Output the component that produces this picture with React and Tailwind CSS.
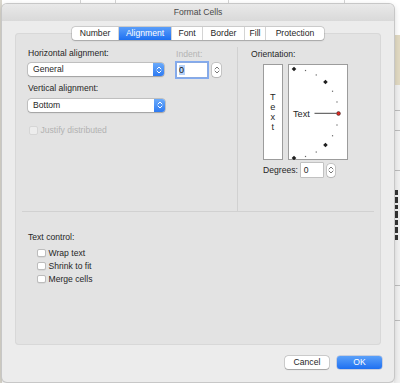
import React from "react";

function UpDown({ color = "#ffffff", sw = 1 }) {
  return (
    <svg width="6" height="10" viewBox="0 0 6 10" fill="none">
      <path d="M1 4 L3 2 L5 4" stroke={color} strokeWidth={sw} strokeLinecap="round" strokeLinejoin="round" />
      <path d="M1 6 L3 8 L5 6" stroke={color} strokeWidth={sw} strokeLinecap="round" strokeLinejoin="round" />
    </svg>
  );
}

function PopUp({ value, className }) {
  return (
    <div className={`flex items-center rounded-[3px] bg-white shadow-[0_0_0_0.5px_rgba(0,0,0,0.25),0_0.5px_1.5px_rgba(0,0,0,0.2)] ${className}`}>
      <span className="flex-1 pl-[5px] text-[8.6px] leading-none text-[#1f1f1f]">{value}</span>
      <span className="flex h-full w-[11px] items-center justify-center rounded-r-[3px] bg-gradient-to-b from-[#6aaafa] to-[#2d7af2]">
        <UpDown />
      </span>
    </div>
  );
}

function Stepper({ className }) {
  return (
    <div className={`flex items-center justify-center rounded-[3px] bg-white shadow-[0_0_0_0.5px_rgba(0,0,0,0.25),0_0.5px_1px_rgba(0,0,0,0.15)] ${className}`}>
      <UpDown color="#555555" sw={0.8} />
    </div>
  );
}

function Check({ label, disabled }) {
  return (
    <div className="flex h-[13px] items-center gap-[3px]">
      <span
        className={
          disabled
            ? "h-[8.5px] w-[8.5px] rounded-[2px] border border-[#d6d6d6] bg-[#ededed]"
            : "h-[8.5px] w-[8.5px] rounded-[2px] border border-[#bcbcbc] bg-white shadow-[0_0.5px_0.5px_rgba(0,0,0,0.1)]"
        }
      />
      <span className={disabled ? "text-[8.6px] text-[#b2b2b2]" : "text-[8.6px] text-[#262626]"}>{label}</span>
    </div>
  );
}

const tabs = [
  { name: "Number", w: "w-[46px]" },
  { name: "Alignment", w: "w-[53px]", active: true },
  { name: "Font", w: "w-[31px]" },
  { name: "Border", w: "w-[42px]" },
  { name: "Fill", w: "w-[21px]" },
  { name: "Protection", w: "w-[59px]" },
];

function Dial() {
  const cx = 5, cy = 48.5, r = 44.5;
  const big = [90, 45, -45, -90];
  const small = [75, 60, 30, 15, -15, -30, -60, -75];
  const pt = (a) => [cx + r * Math.cos((a * Math.PI) / 180), cy - r * Math.sin((a * Math.PI) / 180)];
  return (
    <svg width="58" height="95" viewBox="0 0 58 95">
      {small.map((a) => {
        const [x, y] = pt(a);
        return <rect key={a} x={x - 0.6} y={y - 0.6} width="1.2" height="1.2" fill="#666" />;
      })}
      {big.map((a) => {
        const [x, y] = pt(a);
        return <path key={a} d={`M${x} ${y - 2.3} L${x + 2.3} ${y} L${x} ${y + 2.3} L${x - 2.3} ${y} Z`} fill="#1f1f1f" />;
      })}
      <line x1="25.5" y1="48.3" x2="47.5" y2="48.3" stroke="#333" strokeWidth="0.9" />
      <circle cx={cx + r} cy={cy} r="1.9" fill="#e0261f" stroke="#333" strokeWidth="0.6" />
      <text x="4" y="52" fontSize="9.2" fill="#1f1f1f" fontFamily="Liberation Sans, Arial, sans-serif">Text</text>
    </svg>
  );
}

export default function App() {
  return (
    <div className="relative h-[383px] w-[400px] overflow-hidden bg-white font-['Liberation_Sans',Arial,sans-serif]">
      {/* sheet behind the dialog */}
      <div className="absolute left-0 top-0 h-[383px] w-[2px] bg-[#d9d6cc]" />
      <div className="absolute left-[80px] top-0 h-[5px] w-px bg-[#d3d3d3]" />
      <div className="absolute left-[115px] top-0 h-[5px] w-px bg-[#d3d3d3]" />
      <div className="absolute left-[228px] top-0 h-[5px] w-px bg-[#d3d3d3]" />
      <div className="absolute left-[344px] top-0 h-[5px] w-px bg-[#d3d3d3]" />
      <div className="absolute left-[353px] top-[3px] h-[2px] w-[10px] bg-[#8a8a8a]" />
      <div className="absolute left-[394px] top-[35px] h-[50px] w-[6px] bg-[#e2dac3]" />
      <div className="absolute left-[394px] top-[85px] h-[298px] w-[6px] bg-[#f1f1f1]" />
      <div className="absolute left-[394px] top-[110px] h-px w-[6px] bg-[#bdbdbd]" />
      <div className="absolute left-[394px] top-[130px] h-px w-[6px] bg-[#bdbdbd]" />
      <div className="absolute left-[394px] top-[170px] h-px w-[6px] bg-[#bdbdbd]" />
      <div className="absolute left-[394px] top-[285px] h-px w-[6px] bg-[#bdbdbd]" />
      <div className="absolute left-[394px] top-[320px] h-px w-[6px] bg-[#bdbdbd]" />
      <div className="absolute left-[395px] top-[190px] flex h-[70px] w-[5px] flex-col gap-[2px]">
        <span className="h-[5px] w-[3px] bg-[#333]" />
        <span className="h-[6px] w-[3px] bg-[#333]" />
        <span className="h-[4px] w-[3px] bg-[#333]" />
        <span className="h-[7px] w-[3px] bg-[#333]" />
        <span className="h-[5px] w-[3px] bg-[#333]" />
        <span className="h-[6px] w-[3px] bg-[#333]" />
        <span className="h-[5px] w-[3px] bg-[#333]" />
      </div>
      <div className="absolute left-[83px] top-[381px] h-[2px] w-[89px] bg-[#9aa7c0]" />

      {/* dialog window */}
      <div className="absolute left-[2px] top-[4px] flex h-[378px] w-[392px] flex-col overflow-hidden rounded-[5px] bg-[#ececec] shadow-[0_0_0_1px_#c7c7c7,0_2px_6px_rgba(0,0,0,0.2)]">
        <div className="flex h-[17px] items-center justify-center bg-gradient-to-b from-[#e9e9e9] to-[#d9d9d9] text-[8.6px] text-[#4a4a4a]">
          Format Cells
        </div>

        <div className="mx-[13px] mt-[12px] flex h-[312px] flex-col rounded-[4px] bg-[#e3e3e3] shadow-[inset_0_0_0_1px_#d8d8d8]">
          {/* tabs */}
          <div className="-mt-[6.5px] flex h-[13.3px] self-center overflow-hidden rounded-[3px] bg-white shadow-[0_0_0_0.5px_rgba(0,0,0,0.22),0_0.5px_1.5px_rgba(0,0,0,0.18)]">
            {tabs.map((t, i) => (
              <div
                key={t.name}
                className={`flex items-center justify-center text-[8.6px] ${t.w} ${i > 0 ? "border-l border-[#d4d4d4]" : ""} ${
                  t.active ? "bg-gradient-to-b from-[#5a9ef9] to-[#1c6ff1] text-white" : "text-[#262626]"
                }`}
              >
                {t.name}
              </div>
            ))}
          </div>

          {/* top section */}
          <div className="flex h-[171.7px]">
            <div className="flex w-[222px] pl-[13px]">
              <div className="flex w-[137px] flex-col">
                <span className="mt-[8px] text-[8.6px] leading-[10px] text-[#262626]">Horizontal alignment:</span>
                <PopUp value="General" className="mt-[5px] h-[13.5px] w-[136px]" />
                <span className="mt-[6.5px] text-[8.6px] leading-[10px] text-[#262626]">Vertical alignment:</span>
                <PopUp value="Bottom" className="mt-[6px] h-[13px] w-[137px]" />
                <div className="mt-[12px] pl-[1px]">
                  <Check label="Justify distributed" disabled />
                </div>
              </div>
              <div className="ml-[10px] flex flex-col">
                <span className="mt-[9px] pl-[1px] text-[8.6px] leading-[10px] text-[#b4b4b4]">Indent:</span>
                <div className="mt-[4.3px] flex items-center">
                  <div className="ml-[1.5px] flex h-[13.5px] w-[30px] items-center bg-white pl-[2px] shadow-[0_0_0_0.5px_#8fa9d3,0_0_0_2px_#82aaf0]">
                    <span className="bg-[#b5d1f8] px-[0.5px] text-[9px] leading-[10px] text-[#111]">0</span>
                  </div>
                  <Stepper className="ml-[5.5px] h-[14px] w-[9px]" />
                </div>
              </div>
            </div>

            <div className="mt-[7px] w-px bg-[#d1d1d1]" />

            <div className="flex flex-1 flex-col pl-[13px]">
              <span className="mt-[9px] text-[8.6px] leading-[10px] text-[#262626]">Orientation:</span>
              <div className="mt-[5px] flex gap-[5.6px] pl-[11.7px]">
                <div className="flex h-[96.7px] w-[20px] flex-col items-center justify-center border border-[#9c9c9c] bg-white text-[9.2px] leading-[10.3px] text-[#1f1f1f]">
                  <span>T</span>
                  <span>e</span>
                  <span>x</span>
                  <span>t</span>
                </div>
                <div className="h-[96.7px] w-[59.4px] border border-[#9c9c9c] bg-white">
                  <Dial />
                </div>
              </div>
              <div className="mt-[2.6px] flex items-center pl-[12px]">
                <span className="w-[34px] text-[8.6px] text-[#262626]">Degrees:</span>
                <div className="ml-[3.7px] flex h-[14px] w-[22.6px] items-center bg-white pl-[3px] text-[8.6px] text-[#1f1f1f] shadow-[0_0_0_0.5px_rgba(0,0,0,0.3)]">
                  0
                </div>
                <Stepper className="ml-[4px] h-[13px] w-[8px]" />
              </div>
            </div>
          </div>

          {/* text control */}
          <div className="mx-[7px] h-px bg-[#d1d1d1]" />
          <span className="ml-[13px] mt-[19.3px] text-[8.6px] leading-[10px] text-[#262626]">Text control:</span>
          <div className="ml-[22px] mt-[4.8px] flex flex-col">
            <Check label="Wrap text" />
            <Check label="Shrink to fit" />
            <Check label="Merge cells" />
          </div>
        </div>

        <div className="mr-[12px] mt-[11px] flex justify-end gap-[8px]">
          <button className="flex h-[13.3px] w-[44px] items-center justify-center rounded-[3px] bg-white text-[8.6px] text-[#262626] shadow-[0_0_0_0.5px_rgba(0,0,0,0.25),0_0.5px_1px_rgba(0,0,0,0.2)]">
            Cancel
          </button>
          <button className="flex h-[13.3px] w-[45px] items-center justify-center rounded-[3px] bg-gradient-to-b from-[#5aa0f9] to-[#1d6ff1] text-[8.6px] text-white shadow-[0_0_0_0.5px_rgba(0,40,150,0.3)]">
            OK
          </button>
        </div>
      </div>
    </div>
  );
}
